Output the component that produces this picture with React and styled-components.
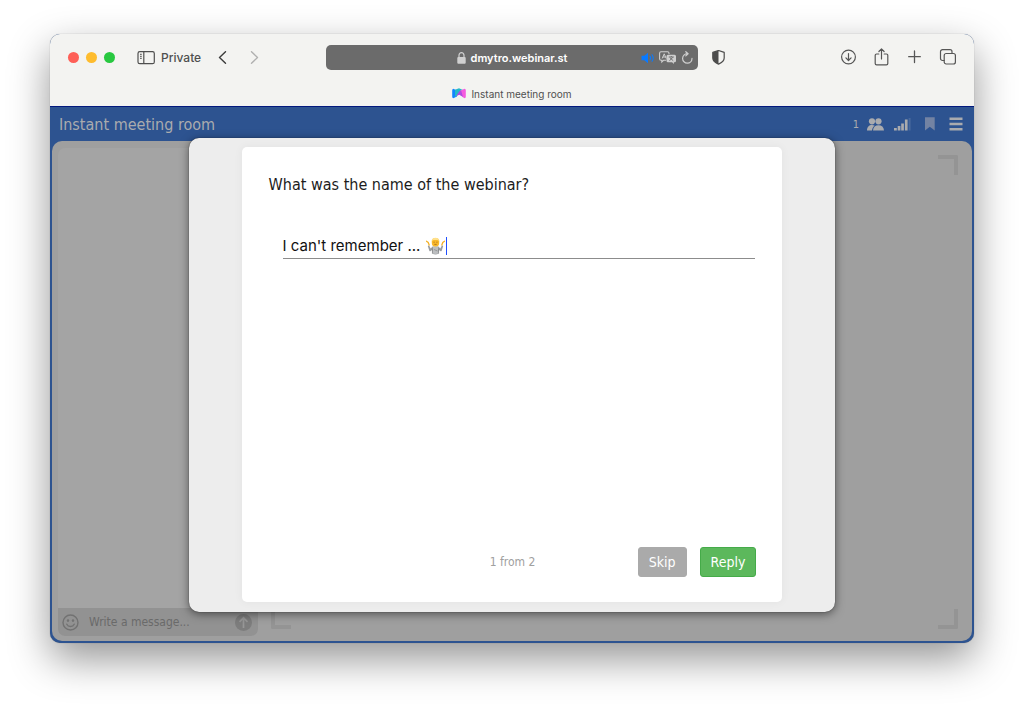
import React, { useState } from 'react';
import styled, { createGlobalStyle } from 'styled-components';

const App = () => {
  const [answer, setAnswer] = useState("I can't remember ...");
  const [message, setMessage] = useState('');

  return (
    <Page>
      <GlobalStyle />
      <Window>
        <Chrome>
          <Toolbar>
            <ToolGroup>
              <Lights>
                <Light $color="#fe5f57" aria-label="Close" />
                <Light $color="#febc2e" aria-label="Minimize" />
                <Light $color="#28c840" aria-label="Zoom" />
              </Lights>
              <PrivateButton>
                <SidebarIcon />
                Private
              </PrivateButton>
              <Arrows>
                <IconButton $color="#3c3c3c" aria-label="Back">
                  <svg width="10" height="14" viewBox="0 0 10 14" {...line} strokeWidth="1.4"><path d="M8.500.7 2.500 6.500l6 5.800" /></svg>
                </IconButton>
                <IconButton $color="#b0b0b0" aria-label="Forward">
                  <svg width="10" height="14" viewBox="0 0 10 14" {...line} strokeWidth="1.4"><path d="m2.500.7 6 5.800-6 5.800" /></svg>
                </IconButton>
              </Arrows>
            </ToolGroup>
            <AddressBar>
              <Address href="#room">
                <LockIcon />
                dmytro.webinar.st
              </Address>
              <AddressTools>
                <SoundIcon />
                <TranslateIcon />
                <ReloadIcon />
              </AddressTools>
            </AddressBar>
            <ToolGroup>
              <IconButton $color="#4c4c4c" aria-label="Privacy report"><ShieldIcon /></IconButton>
              <Actions>
                <IconButton $color="#565656" aria-label="Downloads">
                  <svg width="17" height="17" viewBox="0 0 17 17" {...line}><circle cx="8.500" cy="8" r="6.900" /><path d="M8.500 4.500v7M5.900 8.900l2.600 2.600 2.600-2.600" /></svg>
                </IconButton>
                <IconButton $color="#565656" aria-label="Share">
                  <svg width="17" height="19" viewBox="0 0 17 19" {...line}><path d="M5.800 6H3.600a1.400 1.400 0 0 0-1.400 1.400v8a1.400 1.400 0 0 0 1.400 1.400h9.800a1.400 1.400 0 0 0 1.400-1.400v-8A1.400 1.400 0 0 0 13.400 6h-2.200M8.500 11V1M5.900 3.500l2.600-2.600 2.600 2.600" /></svg>
                </IconButton>
                <IconButton $color="#565656" aria-label="New tab">
                  <svg width="17" height="17" viewBox="0 0 17 17" {...line} strokeWidth="1.300"><path d="M8.500 2v11.500M2.700 7.700h11.600" /></svg>
                </IconButton>
                <IconButton $color="#565656" aria-label="Show tabs">
                  <svg width="17" height="17" viewBox="0 0 17 17" {...line}><rect x="5.200" y="4.500" width="11.200" height="10.500" rx="2" /><path d="M5.200 11.500H3.500a2 2 0 0 1-2-2V2.700a2 2 0 0 1 2-2H11a2 2 0 0 1 2 2v1.500" /></svg>
                </IconButton>
              </Actions>
            </ToolGroup>
          </Toolbar>
          <Tab>
            <RoomLogo />
            Instant meeting room
          </Tab>
        </Chrome>

        <RoomHeader>
          <RoomTitle>Instant meeting room</RoomTitle>
          <RoomTools>
            <Visitors>
              1
              <UsersIcon />
            </Visitors>
            <SignalIcon />
            <IconButton $color="#7383a3" aria-label="Bookmark">
              <svg width="10" height="14" viewBox="0 0 10 14" fill="currentColor"><path d="M0 .3h9.700v13.200L4.800 9.800 0 13.500z" /></svg>
            </IconButton>
            <IconButton $color="#aaabae" aria-label="Menu">
              <svg width="14" height="14" viewBox="0 0 14 14" fill="currentColor"><path d="M.500.5h13V3H.500zM.500 5.700h13v2.500H.500zM.500 11h13v2.500H.500z" /></svg>
            </IconButton>
          </RoomTools>
        </RoomHeader>

        <Room>
          <Chat>
            <Messages />
            <Composer>
              <svg width="17" height="17" viewBox="0 0 17 17" {...line} strokeWidth="1.400">
                <circle cx="8.500" cy="8.500" r="7.500" />
                <path d="M4.800 10.200c1.500 3 5.900 3 7.400 0" />
                <circle cx="6" cy="6.600" r=".6" fill="currentColor" />
                <circle cx="11" cy="6.600" r=".6" fill="currentColor" />
              </svg>
              <MessageInput
                aria-label="Message"
                placeholder="Write a message..."
                value={message}
                onChange={(e) => setMessage(e.target.value)}
              />
              <IconButton $color="#7d7d7d" aria-label="Send">
                <svg width="17" height="17" viewBox="0 0 17 17"><circle cx="8.500" cy="8.500" r="8.500" fill="currentColor" /><path d="M8.500 14V4M4.500 7.800l4-4 4 4" fill="none" stroke="#979797" strokeWidth="1.700" /></svg>
              </IconButton>
            </Composer>
          </Chat>
          <Stage>
            <Corner $side="top left" />
            <Corner $side="top right" />
            <Corner $side="bottom left" />
            <Corner $side="bottom right" />
          </Stage>
        </Room>

        <Overlay>
          <Modal role="dialog" aria-label="Survey">
            <Card onSubmit={(e) => e.preventDefault()}>
              <Question htmlFor="answer">What was the name of the webinar?</Question>
              <AnswerField>
                <AnswerInput id="answer" value={answer} onChange={(e) => setAnswer(e.target.value)} />
                <ShrugIcon />
                <Caret />
              </AnswerField>
              <Footer>
                <Counter>1 from 2</Counter>
                <Buttons>
                  <Button type="button" $color="#aaaaaa">Skip</Button>
                  <Button type="submit" $color="#5cb85c" $edge="#45ab49">Reply</Button>
                </Buttons>
              </Footer>
            </Card>
          </Modal>
        </Overlay>
      </Window>
    </Page>
  );
};

const line = {
  fill: 'none',
  stroke: 'currentColor',
  strokeWidth: 1.2,
  strokeLinecap: 'round',
  strokeLinejoin: 'round',
};

const SidebarIcon = () => (
  <svg width="18" height="14" viewBox="0 0 18 14" {...line}>
    <rect x="1" y=".7" width="16.300" height="12" rx="1.800" />
    <path d="M6.800 1v11.500" />
    <path d="M3.400 3.300h1M3.400 5.300h1M3.400 7.300h1" strokeWidth="1" />
  </svg>
);

const LockIcon = () => (
  <svg width="9" height="12" viewBox="0 0 9 12">
    <rect x=".3" y="5" width="8.400" height="6.800" rx="1" fill="#d0d0d0" />
    <path d="M2 5.500V3.200a2.500 2.500 0 0 1 5 0v2.300" fill="none" stroke="#d0d0d0" strokeWidth="1.200" />
  </svg>
);

const SoundIcon = () => (
  <svg width="14" height="12" viewBox="0 0 14 12">
    <path d="M.5 3.800h2.800L7 .8v10.400L3.300 8.200H.5z" fill="#0a7aff" />
    <path d="M9 4.200q1.300 1.800 0 3.600M11 2.700q2.400 3.300 0 6.600" fill="none" stroke="#0a7aff" strokeWidth="1.100" strokeLinecap="round" />
  </svg>
);

const TranslateIcon = () => (
  <svg width="18" height="14" viewBox="0 0 18 14">
    <path d="M7 9.300H4.500L2.800 11V9.300H2A1.500 1.500 0 0 1 .6 7.800V2.200A1.500 1.500 0 0 1 2 .7h6.600A1.500 1.500 0 0 1 10 2.200V3" fill="none" stroke="#cfcfcf" strokeWidth="1.100" />
    <path d="M3.200 7.500 5.200 2.800 7.200 7.500M3.900 6h2.600" fill="none" stroke="#cfcfcf" />
    <path d="M9 3.700h6.500A1.500 1.500 0 0 1 17 5.200v4.600a1.500 1.500 0 0 1-1.500 1.500h-.6V13l-1.800-1.700H9a1.500 1.500 0 0 1-1.500-1.500V5.200A1.500 1.500 0 0 1 9 3.700z" fill="#cfcfcf" />
    <path d="M9.800 6h5M12.300 5v1M10.500 9.800l3.300-3.500M10.900 6.700l3.300 3" fill="none" stroke="#696969" strokeWidth=".9" />
  </svg>
);

const ReloadIcon = () => (
  <svg width="12" height="13" viewBox="0 0 12 13" {...line} strokeWidth="1.200">
    <path d="M6.300 2.700a4.700 4.700 0 1 0 4.700 4.700M4.800.700l2.300 2-2.300 2.200" />
  </svg>
);

const ShieldIcon = () => (
  <svg width="13" height="15" viewBox="0 0 13 15">
    <path d="M6.500.5 12.200 2.400v5.500c0 2.800-2.700 4.800-5.700 6.200C3.500 12.700.8 10.700.8 7.900V2.400z" fill="none" stroke="currentColor" strokeWidth="1.200" strokeLinejoin="round" />
    <path d="M6.500.5v13.600C3.500 12.700.8 10.700.8 7.900V2.400z" fill="currentColor" />
  </svg>
);

const RoomLogo = () => (
  <svg width="14" height="11" viewBox="0 0 14 11">
    <path d="M1.300.8 5 2.500v6L1.300 10.300Q.2 10 .2 8.500v-6Q.2 1.100 1.300.8z" fill="#1185ff" />
    <path d="M3 1.800 7 .3l4 1.800L7.500 6 3 9z" fill="#24b9c8" />
    <path d="M12.700.8 8.200 2.500l2.300 6.400 2.200 1.400q1.100-.3 1.100-1.800v-6q0-1.400-1.100-1.700z" fill="#f45ade" />
    <path d="M4 8.200 7.600 3l1.600-.2L11 9 7.200 6.800z" fill="#b04be0" />
  </svg>
);

const UsersIcon = () => (
  <svg width="17" height="13" viewBox="0 0 17 13" fill="#aaabae">
    <circle cx="5" cy="3.300" r="3.100" />
    <circle cx="11.500" cy="3.300" r="3.100" />
    <path d="M0 12.500C0 9 2 7 5 7c1 0 2 .3 2.700.8-1.600 1-2.500 2.600-2.700 4.700z" />
    <path d="M6 12.500C6.200 9 8.300 7.200 11.500 7.200S16.800 9 17 12.500z" />
  </svg>
);

const SignalIcon = () => (
  <svg width="17" height="13" viewBox="0 0 17 13" fill="#aaabae">
    <path d="M0 10h2.800v2.500H0zM3.700 8h2.700v4.500H3.700zM7.200 5.500h2.700v7H7.200zM10.900 1.500h2.700v11h-2.700z" />
    <path d="M14.600 0h2v12.500h-2z" fill="#47689d" />
  </svg>
);

// Person shrugging, drawn at text size
const ShrugIcon = () => (
  <svg width="19" height="18" viewBox="0 0 19 18" role="img" aria-label="Person shrugging">
    <path d="M6.500 9.500h6l1.800 2L16 8.200l1.200.8-1.500 4.800q-.6.900-1.500.2L13 13l-.4 3.800q-3.100 1.200-6.200 0L6 13l-1.200 1q-.9.700-1.500-.2L1.800 9 3 8.200l1.700 3.300z" fill="#9a9da0" />
    <path d="M7 9.800h5l.2 6.800q-2.700.8-5.400 0z" fill="#bcbec0" />
    <path d="M6.400 11.500v5M12.600 11.500v5M8 12.500l3.500 1.500" fill="none" stroke="#7c7f82" strokeWidth=".6" />
    <path d="M.5 4.200 2.200 5.400 3.200 8M18.500 4.200 16.800 5.400 15.800 8" fill="none" stroke="#f5b227" strokeWidth="1.300" strokeLinecap="round" />
    <rect x="5.800" y="1" width="7.400" height="8.400" rx="3.500" fill="#f9b82a" />
    <path d="M5.600 4.500C5.400-.4 13.600-.4 13.400 4.500 12.500 3.200 12 3 9.500 3S6.500 3.200 5.600 4.500z" fill="#ffe08a" />
    <path d="M7.500 5.200h1.200M10.300 5.200h1.200M8.300 7.400h2.400" stroke="#96601c" strokeWidth=".7" />
  </svg>
);

// Styled Components
const GlobalStyle = createGlobalStyle`
  * {
    box-sizing: border-box;
  }

  body {
    margin: 0;
    background: #fff;
    font-family: 'DejaVu Sans Condensed', 'Noto Sans', sans-serif;
  }

  button, input {
    font-family: inherit;
  }

  svg {
    display: block;
    flex-shrink: 0;
  }
`;

const Page = styled.main`
  display: flex;
  min-height: 100vh;
  padding: 34px 50px 67px;
`;

const Window = styled.section`
  position: relative;
  display: flex;
  flex: 1;
  flex-direction: column;
  min-width: 0;
  overflow: hidden;
  border-radius: 10px;
  background: #2d5390;
  box-shadow: 0 0 1px rgba(0, 0, 0, 0.4), 0 16px 40px rgba(0, 0, 0, 0.42);
`;

const Chrome = styled.header`
  padding: 0 18px;
  background: #f3f3f1;
`;

const Toolbar = styled.div`
  display: grid;
  grid-template-columns: 1fr minmax(0, 372px) 1fr;
  align-items: center;
  column-gap: 14px;
  height: 47px;
`;

const ToolGroup = styled.div`
  display: flex;
  align-items: center;
  justify-content: flex-start;
  gap: 16px;
`;

const Lights = styled.div`
  display: flex;
  gap: 7px;
  padding-right: 6px;
`;

const Light = styled.button`
  width: 11px;
  height: 11px;
  padding: 0;
  border: none;
  border-radius: 50%;
  background: ${({ $color }) => $color};
`;

const IconButton = styled.button`
  display: flex;
  padding: 0;
  border: none;
  background: none;
  color: ${({ $color }) => $color};
  cursor: pointer;
`;

const PrivateButton = styled(IconButton)`
  align-items: center;
  gap: 6px;
  color: #4f4f4f;
  font: 500 12px/16px Inter, sans-serif;
`;

const Arrows = styled.div`
  display: flex;
  gap: 22px;
`;

const AddressBar = styled.div`
  display: grid;
  grid-template-columns: 1fr auto 1fr;
  align-items: center;
  height: 25px;
  padding: 0 5px;
  border-radius: 5px;
  background: #6b6b6b;
`;

const Address = styled.a`
  display: flex;
  grid-column: 2;
  align-items: center;
  gap: 5px;
  color: #fff;
  font: 600 11px/16px Inter, sans-serif;
  text-decoration: none;
`;

const AddressTools = styled.div`
  display: flex;
  align-items: center;
  justify-content: flex-end;
  gap: 4px;
  color: #cfcfcf;
`;

const Actions = styled.div`
  display: flex;
  align-items: center;
  gap: 16px;
  margin-left: auto;
`;

const Tab = styled.div`
  display: flex;
  align-items: center;
  justify-content: center;
  gap: 5px;
  height: 25px;
  color: #505050;
  font: 400 10px/16px Inter, sans-serif;
`;

const RoomHeader = styled.header`
  display: flex;
  align-items: center;
  justify-content: space-between;
  height: 35px;
  padding: 0 11px 0 9px;
  border-top: 1px solid #02197e;
  background: #2d5390;
`;

const RoomTitle = styled.h1`
  margin: 0;
  padding-top: 2px;
  color: #aaabae;
  font-size: 16px;
  font-weight: 400;
  line-height: 24px;
`;

const RoomTools = styled.div`
  display: flex;
  align-items: center;
  gap: 14px;
`;

const Visitors = styled.span`
  display: flex;
  align-items: center;
  gap: 8px;
  margin-right: -4px;
  color: #aaabae;
  font-size: 11px;
`;

const Room = styled.div`
  display: flex;
  flex: 1;
  gap: 13px;
  margin: 0 2px 2px;
  padding: 7px 12px 5px 6px;
  border-radius: 10px;
  background: #9f9f9f;
`;

const Chat = styled.aside`
  display: flex;
  flex: 0 0 200px;
  flex-direction: column;
  overflow: hidden;
  border-radius: 7px;
  background: #a4a4a4;
`;

const Messages = styled.div`
  flex: 1;
`;

const Composer = styled.div`
  display: flex;
  align-items: center;
  gap: 10px;
  height: 28px;
  padding: 0 6px 0 4px;
  background: #929292;
  color: #727272;
`;

const MessageInput = styled.input`
  flex: 1;
  min-width: 0;
  padding: 0;
  border: none;
  outline: none;
  background: none;
  color: #5c5c5c;
  font-size: 12px;
  line-height: 20px;

  &::placeholder {
    color: #6a6a6a;
  }
`;

const Stage = styled.div`
  display: grid;
  flex: 1;
  grid-template-columns: auto auto;
  align-content: space-between;
  justify-content: space-between;
  padding: 7px 2px 7px 0;
`;

const Corner = styled.span`
  width: 20px;
  height: 20px;
  border: 0 solid #949494;
  ${({ $side }) => $side.split(' ').map((side) => `border-${side}-width: 4px;`).join(' ')}
  border-${({ $side }) => $side.replace(' ', '-')}-radius: 2px;
`;

const Overlay = styled.div`
  position: absolute;
  inset: 0;
  display: flex;
  justify-content: center;
  padding: 104px 0 31px;
`;

const Modal = styled.div`
  display: flex;
  width: 70%;
  padding: 9px 53px 10px;
  border-radius: 10px;
  background: #ededed;
  box-shadow: 0 0 1px rgba(0, 0, 0, 0.8), 0 2px 10px rgba(0, 0, 0, 0.5);
`;

const Card = styled.form`
  display: flex;
  flex: 1;
  flex-direction: column;
  min-width: 0;
  padding: 26px 26px 25px 27px;
  border-radius: 5px;
  background: #fff;
  box-shadow: 0 0 10px rgba(0, 0, 0, 0.05);
`;

const Question = styled.label`
  color: #1c1c1c;
  font-size: 16px;
  line-height: 24px;
`;

const AnswerField = styled.div`
  display: flex;
  align-items: center;
  height: 28px;
  margin: 34px 1px 0 14px;
  padding-top: 2px;
  border-bottom: 1px solid #8c8c8c;
`;

const AnswerInput = styled.input`
  field-sizing: content;
  max-width: 90%;
  margin-right: 6px;
  padding: 0;
  border: none;
  outline: none;
  background: none;
  color: #111;
  font: 400 15px/20px Inter, sans-serif;
`;

const Caret = styled.span`
  width: 1px;
  height: 18px;
  margin-left: 1px;
  background: #1f4fff;
`;

const Footer = styled.footer`
  display: grid;
  grid-template-columns: 1fr auto 1fr;
  align-items: center;
  margin-top: auto;
`;

const Counter = styled.span`
  grid-column: 2;
  color: #a0a0a0;
  font-size: 12px;
  line-height: 20px;
`;

const Buttons = styled.div`
  display: flex;
  justify-content: flex-end;
  gap: 13px;
`;

const Button = styled.button`
  height: 30px;
  padding: 0 10px;
  border: 1px solid ${({ $edge, $color }) => $edge || $color};
  border-radius: 3px;
  background: ${({ $color }) => $color};
  color: #fff;
  font-size: 14px;
  line-height: 20px;
  cursor: pointer;
`;

export default App;
